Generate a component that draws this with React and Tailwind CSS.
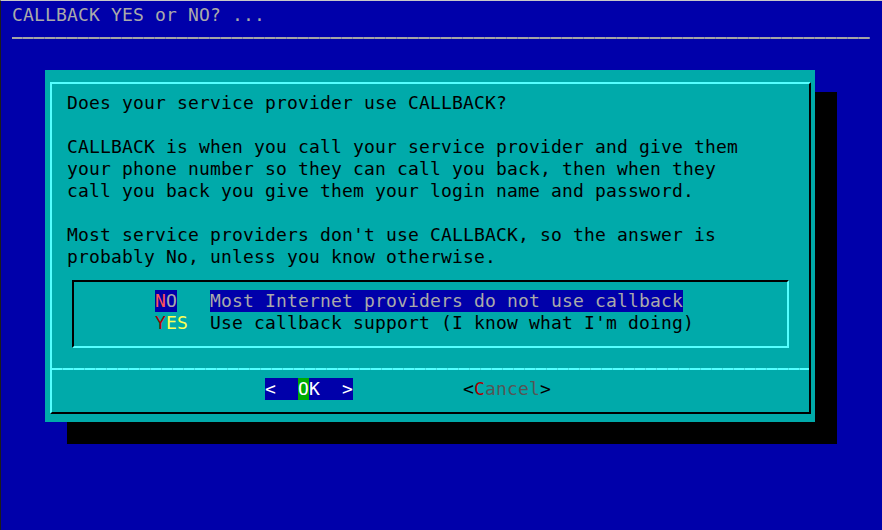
import React from 'react'

const intro = [
    'Does your service provider use CALLBACK?',
    '',
    'CALLBACK is when you call your service provider and give them',
    'your phone number so they can call you back, then when they',
    'call you back you give them your login name and password.',
    '',
    "Most service providers don't use CALLBACK, so the answer is",
    'probably No, unless you know otherwise.',
]

export default function App() {
    return (
        <div className="w-[882px] h-[530px] overflow-hidden bg-[#0000aa] border-t border-l border-t-[#c8c8c8] border-l-[#1c1c1c] pt-[3px] font-['DejaVu_Sans_Mono','Liberation_Mono',monospace] text-[18px] leading-[22px] tracking-[0.163px] whitespace-pre">
            {/* backtitle */}
            <div className="h-[22px] pl-[11px] text-[#aaaaaa]">CALLBACK YES or NO? ...</div>
            <div className="h-[22px] pl-[11px] pt-[11px]">
                <div className="w-[858px] h-[2px] bg-[repeating-linear-gradient(90deg,#a4a4a4_0_10px,#7c7ca8_10px_11px)]" />
            </div>

            {/* dialog */}
            <div className="mt-[22px] ml-[44px] w-[770px] h-[352px] bg-[#00aaaa] shadow-[22px_22px_0_0_#000] pt-[12px] pl-[5px] pr-[4px]">
                <div className="h-[332px] border-2 border-t-[#55ffff] border-l-[#55ffff] border-r-black border-b-black">
                    <div className="pt-[8px] pl-[15px] text-black">
                        {intro.map((line, i) => (
                            <div key={i} className="h-[22px]">{line}</div>
                        ))}

                        {/* menu */}
                        <div className="mt-[12px] ml-[5px] w-[717px] h-[68px] border-2 border-t-black border-l-black border-r-[#55ffff] border-b-[#55ffff] pt-[8px]">
                            <div className="flex h-[22px] pl-[81px]">
                                <div className="w-[55px]">
                                    <span className="inline-block h-[22px] bg-[#0000aa]">
                                        <span className="text-[#ff5555]">N</span>
                                        <span className="text-[#aaaaaa]">O</span>
                                    </span>
                                </div>
                                <span className="inline-block h-[22px] bg-[#0000aa] text-[#aaaaaa]">Most Internet providers do not use callback</span>
                            </div>
                            <div className="flex h-[22px] pl-[81px]">
                                <div className="w-[55px]">
                                    <span className="text-[#aa0000]">Y</span>
                                    <span className="text-[#ffff55]">ES</span>
                                </div>
                                <span>Use callback support (I know what I'm doing)</span>
                            </div>
                        </div>
                    </div>

                    {/* separator */}
                    <div className="mt-[20px] h-[2px] bg-[repeating-linear-gradient(90deg,#55ffff_0_10px,#44dddd_10px_11px)]" />

                    {/* buttons */}
                    <div className="mt-[8px] flex h-[22px] pl-[213px]">
                        <div className="flex w-[88px] h-[22px] bg-[#0000aa] text-white">
                            <span>{'<  '}</span>
                            <span className="bg-[#00aa00]">O</span>
                            <span>K</span>
                            <span className="ml-auto">{'>'}</span>
                        </div>
                        <div className="ml-[110px] flex">
                            <span className="text-black">{'<'}</span>
                            <span className="text-[#aa0000]">C</span>
                            <span className="text-[#555555]">ancel</span>
                            <span className="text-black">{'>'}</span>
                        </div>
                    </div>
                </div>
            </div>
        </div>
    )
}
